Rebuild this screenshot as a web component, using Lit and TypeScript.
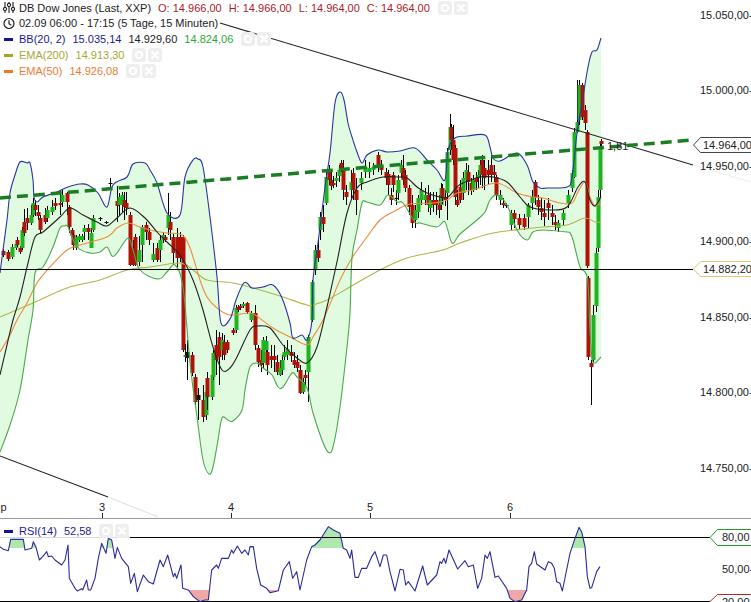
import { LitElement, html, css, svg } from "lit";
import { customElement } from "lit/decorators.js";

type Pt = [number, number];

// band and average curves, read off the chart in pixels
const upper: Pt[] = [[0,273],[3,250],[7,220],[10,193],[15,175],[20,162],[27,163],[30,163],[33,180],[34,197],[37,202],[43,197],[57,192],[68,187],[80,184],[88,185],[98,193],[107,207],[113,185],[127,177],[133,164],[145,163],[150,170],[157,183],[167,213],[180,215],[185,177],[193,160],[198,159],[203,167],[210,217],[217,277],[221,323],[230,319],[236,300],[243,284],[247,283],[252,288],[263,287],[273,285],[282,298],[290,323],[293,338],[302,335],[307,340],[312,320],[313,280],[318,243],[325,187],[330,153],[335,103],[340,92],[344,100],[348,123],[352,137],[357,152],[362,163],[367,155],[378,150],[387,152],[400,151],[415,148],[427,160],[437,170],[445,180],[448,150],[455,138],[467,136],[485,135],[490,147],[493,158],[500,161],[517,153],[527,165],[533,182],[540,188],[547,188],[567,187],[572,177],[577,133],[583,97],[588,67],[592,52],[597,50],[601,38]];
const lower: Pt[] = [[0,452],[10,425],[20,390],[28,340],[33,310],[35,273],[43,267],[53,247],[60,228],[65,226],[68,227],[77,247],[90,253],[100,252],[107,247],[112,256],[117,253],[128,238],[133,250],[140,270],[158,279],[167,272],[175,265],[183,287],[190,363],[197,417],[203,460],[209,474],[213,467],[218,440],[222,418],[228,420],[233,421],[242,410],[245,390],[250,367],[257,363],[263,368],[272,375],[278,387],[283,387],[292,373],[297,377],[307,388],[313,413],[322,440],[328,452],[333,447],[340,407],[347,347],[350,313],[352,258],[357,230],[362,203],[367,202],[380,205],[388,195],[397,202],[403,203],[415,222],[420,223],[437,227],[445,222],[452,243],[460,234],[477,220],[485,212],[490,200],[497,195],[507,205],[517,230],[527,240],[533,232],[543,230],[567,232],[570,233],[573,240],[580,267],[585,272],[588,283],[590,330],[592,358],[595,363],[601,357]];
const middle: Pt[] = [[0,375],[7,345],[13,320],[20,297],[28,263],[35,237],[43,232],[60,217],[70,208],[83,215],[97,222],[107,226],[117,218],[130,208],[145,218],[157,232],[168,243],[180,255],[193,280],[203,310],[213,347],[222,370],[230,368],[237,357],[250,330],[258,326],[270,328],[283,345],[297,358],[307,363],[317,347],[327,307],[333,280],[338,257],[347,213],[357,188],[367,182],[383,177],[397,177],[407,178],[417,187],[427,193],[440,197],[448,197],[457,187],[463,183],[480,177],[493,177],[507,182],[520,197],[530,207],[550,210],[567,207],[578,187],[585,182],[590,200],[595,206],[601,197]];
const ema50: Pt[] = [[0,352],[10,335],[17,320],[27,303],[37,283],[50,267],[67,250],[80,245],[107,237],[117,228],[128,223],[140,227],[150,230],[167,233],[182,235],[190,248],[200,280],[207,297],[217,308],[230,315],[250,313],[258,317],[273,328],[290,337],[307,345],[313,337],[323,320],[333,297],[340,280],[352,258],[367,237],[380,220],[393,212],[410,204],[433,203],[447,200],[457,193],[473,190],[497,183],[517,193],[533,197],[543,198],[560,203],[572,203],[578,192],[585,182],[590,197],[595,206],[601,202]];
const ema200: Pt[] = [[0,317],[33,303],[67,288],[100,280],[127,270],[150,267],[180,263],[193,270],[207,280],[233,283],[260,290],[283,297],[307,305],[313,305],[327,300],[350,287],[380,270],[407,258],[443,250],[460,243],[493,233],[533,228],[543,227],[567,225],[585,218],[595,222],[601,222]];

const rsiA: number[][] = [[0,170],[10,178],[25,182],[32,148],[70,148],[75,180],[95,175],[100,155],[108,172],[118,210],[128,200],[140,185],[145,200],[155,198],[165,210],[185,225],[195,210],[204,165],[208,265],[225,295],[232,303],[245,296],[248,300],[260,270],[265,300],[272,300],[285,265],[295,205],[305,160],[318,190],[325,145],[335,150],[345,205],[352,172],[365,205],[385,230],[392,280],[403,250],[412,305],[430,255],[445,275],[460,282],[480,210],[490,230],[503,195],[520,260],[525,250],[530,265],[543,225],[548,295],[565,300],[580,320],[600,335],[615,330],[625,330],[635,240],[650,225],[655,235],[665,205],[685,205],[695,180],[700,190],[712,168],[725,190],[735,180],[745,195],[750,170],[760,170],[770,235],[782,285],[800,295],[810,308],[835,302],[850,240],[868,215],[878,265],[890,245],[900,300],[920,210],[935,170],[945,165],[960,150],[985,110],[1000,120],[1020,130],[1030,175],[1040,180],[1050,205],[1055,180],[1065,262],[1075,262],[1085,235],[1100,235],[1115,200]];
const rsiB: number[][] = [[0,185],[15,230],[25,195],[35,195],[45,245],[60,303],[75,238],[85,240],[92,285],[100,275],[120,303],[143,228],[157,285],[185,255],[195,215],[200,220],[207,205],[212,220],[222,180],[248,237],[270,212],[280,230],[295,225],[308,295],[320,265],[330,195],[337,205],[345,185],[360,262],[370,258],[395,295],[405,325],[420,335],[440,330],[455,300],[462,230],[470,220],[478,185],[485,222],[510,240],[520,215],[530,220],[538,235],[545,275],[555,280],[562,303],[585,190],[600,145],[612,112],[620,125],[630,170],[637,260],[645,295],[650,293],[665,245],[675,230]];
const rsi: Pt[] = [
  ...rsiA.map(([x, y]): Pt => [x / 3, y / 3 + 490]),
  ...rsiB.map(([x, y]): Pt => [x / 3 + 375, y / 3 + 490]),
];

// x, body top, body bottom, colour, wick top, wick bottom
type Candle = [number, number, number, string, number?, number?];
const candles: Candle[] = [
  [3,251,255,"r"],[8,252,259,"r"],[12,247,257,"g",244,259],[16,244,248,"g"],[17,240,245,"r",237,247],[20,248,252,"r"],[22,230,248,"g",227,250],[24,222,233,"r",209,236],[27,218,223,"r",208,230],[31,215,223,"g",205,225],[33,203,215,"g",198,217],[35,205,210,"r",200,216],[38,212,216,"r",205,220],[40,218,230,"r",215,233],[45,215,222,"r",208,224],[47,210,218,"g",206,222],[52,207,212,"g",200,215],[55,203,206,"r",198,210],[60,203,205,"r",190,215],[62,195,202,"g",190,207],[67,193,202,"r",192,215],[69,207,227,"r",205,233],[72,230,236,"r"],[73,235,245,"r",233,250],[76,237,248,"g"],[79,236,240,"g"],[82,236,240,"g"],[84,228,232,"g",225,240],[88,228,232,"r",224,240],[91,233,248,"g",228,248],[93,218,230,"g",215,232],
  [100,218,219,"k",217,221],[106,222,223,"k",221,224],[110,183,184,"k",178,190],[117,201,206,"r",186,222],[119,197,205,"g",193,215],[122,195,205,"g",192,212],[124,200,207,"r",192,220],[126,203,208,"r",192,215],[130,215,265,"r",212,266],[133,248,265,"r",240,266],[135,237,265,"r",234,266],[139,250,262,"g",236,266],[142,227,245,"g",225,262],[146,225,232,"r",222,240],[149,232,240,"r",228,245],[153,254,260,"g",243,262],[157,248,260,"r",243,262],[160,240,250,"g",235,262],[163,235,240,"g",232,243],[165,237,240,"r"],[168,215,228,"g",193,235],[170,222,230,"r",212,240],[173,237,253,"r",234,265],[177,237,258,"r",228,268],[180,237,258,"r",232,262],
  [183,237,350,"r"],[185,355,357,"g",344,362],[187,352,358,"k",340,380],[192,355,373,"r",352,376],[195,377,402,"r",374,405],[198,395,400,"k",388,420],[203,400,417,"r",385,422],[206,392,415,"g",385,420],[207,378,397,"r",372,410],[212,375,397,"g",372,400],[213,353,377,"g",350,380],[216,345,360,"r",330,375],[219,337,357,"r",332,385],[222,340,350,"g",333,360],[224,342,355,"r",335,360],[227,342,350,"r",340,353],
  [233,330,333,"r"],[236,308,330,"g",305,333],[238,307,310,"r"],[240,306,308,"r"],[243,304,306,"g"],[247,303,312,"r",302,314],[251,313,320,"g"],[255,313,345,"r",305,350],[258,348,362,"r",345,367],[261,360,365,"r",350,372],[263,340,363,"g",337,368],[266,341,350,"g",336,362],[267,352,365,"r",350,375],[271,356,360,"r",345,368],[274,356,360,"r",345,372],[277,362,372,"r",355,375],[280,368,375,"g",360,376],[282,360,370,"g",355,375],[284,352,357,"g",345,360],[287,349,355,"g",340,360],[291,352,356,"r",345,362],[294,360,365,"r",352,368],[297,362,368,"r",355,372],[300,370,393,"r",365,394],[303,382,392,"g",378,394],[305,375,378,"r",370,385],[308,337,372,"g",335,402],
  [312,282,320,"g",280,322],[315,250,270,"g",245,275],[318,250,258,"r",240,262],[320,217,230,"g",212,240],[323,217,224,"r",205,232],[326,177,203,"g",172,205],[329,172,180,"r",165,185],[331,180,186,"r",172,190],[333,183,185,"r",176,188],[336,178,181,"g",172,187],[339,170,176,"g",165,182],[341,163,168,"r",160,172],[343,168,190,"r",160,200],[346,192,197,"r",185,205],[351,182,190,"g",170,200],[353,173,190,"r",168,200],[356,190,200,"r",178,215],[361,178,183,"g",172,190],[365,167,172,"g",160,178],[369,168,172,"g",162,178],[373,167,170,"g",163,175],[378,155,165,"r",152,172],[381,167,170,"r",160,175],[386,172,178,"r",168,185],[388,174,185,"r",170,195],[391,195,200,"r",188,205],[393,175,185,"r",172,192],[396,198,199,"k",190,205],[398,180,193,"g",175,200],[401,165,173,"g",160,178],[403,168,180,"r",155,185],[405,175,188,"r",170,192],[409,188,207,"r",185,215],[412,205,223,"r",195,228],[415,210,220,"g",205,228],[418,198,212,"g",195,218],[421,190,200,"g",182,205],[425,195,200,"g",188,205],[428,195,205,"r",185,212],[430,200,208,"g",192,215],[433,200,205,"r",192,212],[436,200,205,"r",192,215],[439,205,210,"r",195,218],[441,188,205,"g",183,210],[442,188,197,"r",184,204],[445,197,200,"r",190,206],[447,152,193,"g",148,220],
  [450,127,150,"g",114,155],[451,127,140,"r",124,150],[453,140,160,"r",125,165],[455,148,197,"r",145,205],[457,200,205,"r",190,207],[460,187,200,"r",180,203],[463,178,193,"g",172,200],[466,170,180,"g",163,190],[468,172,182,"r",165,195],[471,183,190,"r",178,195],[473,180,190,"g",175,192],[476,178,182,"r",172,190],[478,175,178,"g",170,188],[480,165,175,"g",160,185],[482,160,175,"r",155,188],[484,168,178,"r",160,190],[488,170,175,"r",160,185],[491,165,175,"r",155,182],[494,172,175,"r",165,182],[496,177,195,"r",175,200],[500,195,200,"g",190,205],[503,203,205,"r",198,208],[506,205,206,"k",203,208],
  [511,213,225,"g",210,230],[514,213,219,"r",210,228],[519,218,225,"r",214,230],[524,218,227,"r",214,230],[528,205,217,"g",203,228],[532,197,203,"g",190,210],[535,182,197,"r",180,205],[538,200,207,"r",195,215],[541,208,212,"r",198,220],[544,213,217,"r",200,226],[548,203,208,"r",198,220],[552,213,217,"r",205,225],[555,222,225,"r",215,230],[558,223,228,"g",220,232],[563,213,220,"g",210,225],[568,195,203,"g",190,208],[572,173,188,"g",170,192],[574,132,177,"g",128,178],[577,122,132,"g",80,133],[579,85,120,"g",80,125],[582,85,117,"r",83,120],[585,110,123,"r",105,130],[587,132,266,"r"],[588,278,357,"r",276,360],[591,363,367,"r",360,405],[593,315,360,"g",305,362],[596,253,306,"g",248,312],[598,197,248,"g",190,252],[600,147,190,"g",144,197],[601,141,144,"r"],
];

const fillCol: Record<string, string> = { g: "#1db41d", r: "#b01208", k: "#111" };

function pts(p: Pt[]) {
  return p.map(([x, y]) => `${x},${y}`).join(" ");
}

// catmull-rom through the points, keeps the bands round instead of kinked
function smooth(p: Pt[]) {
  let d = `M${p[0][0]} ${p[0][1]}`;
  for (let i = 0; i < p.length - 1; i++) {
    const a = p[Math.max(i - 1, 0)], b = p[i], c = p[i + 1], e = p[Math.min(i + 2, p.length - 1)];
    const c1x = b[0] + (c[0] - a[0]) / 6, c1y = b[1] + (c[1] - a[1]) / 6;
    const c2x = c[0] - (e[0] - b[0]) / 6, c2y = c[1] - (e[1] - b[1]) / 6;
    d += `C${c1x.toFixed(1)} ${c1y.toFixed(1)} ${c2x.toFixed(1)} ${c2y.toFixed(1)} ${c[0]} ${c[1]}`;
  }
  return d;
}

const axisY: [string, number][] = [["15.050,00-",15],["15.000,00-",90],["14.950,00-",166],["14.900,00-",241],["14.850,00-",317],["14.800,00-",392],["14.750,00-",468]];
const dates: [string, number][] = [["3",102],["4",231],["5",370],["6",510]];

@customElement("app-root")
export class AppRoot extends LitElement {
  static styles = css`
    :host {
      display: block;
      position: relative;
      width: 751px;
      height: 602px;
      overflow: hidden;
      background: #fff;
      font-family: "Liberation Sans", Arial, sans-serif;
      font-size: 11px;
      color: #222;
    }
    .chart { display: block; }
    .chart text { font-family: "Liberation Sans", Arial, sans-serif; font-size: 11px; fill: #222; }
    .curve { fill: none; stroke-width: 1.1; stroke-linejoin: round; }
    .legend {
      position: absolute;
      left: 3px;
      top: 0;
      display: flex;
      flex-direction: column;
    }
    .rsi-legend {
      position: absolute;
      left: 0;
      top: 523px;
      width: 127px;
      height: 15px;
      padding-left: 3px;
      background: rgba(255, 255, 255, 0.85);
      display: flex;
    }
    .row {
      display: flex;
      align-items: center;
      height: 16px;
      white-space: nowrap;
      gap: 7px;
    }
    .row svg { flex: none; width: 12px; height: 13px; margin-right: 4px; }
    .row.first { height: 15px; }
    .mark { flex: none; width: 9px; height: 3px; margin: 0 6px 0 1px; }
    .label { margin-left: -7px; }
    .btns { display: flex; gap: 2px; margin-left: 1px; }
    .btn {
      width: 14px;
      height: 14px;
      border-radius: 3px;
      background: #eeeeee;
      display: flex;
      align-items: center;
      justify-content: center;
    }
    .btn svg { width: 10px; height: 10px; margin: 0; }
    .red { color: #a81c2c; }
    .blue { color: #1b1b8e; }
    .dark { color: #222; }
    .green { color: #2aa838; }
    .olive { color: #a8a832; }
    .orange { color: #ee7a30; }
    .m-blue { background: #14148c; }
    .m-olive { background: #a8a820; }
    .m-orange { background: #f07820; }
  `;

  private btns() {
    return html`<span class="btns">
      <span class="btn"><svg viewBox="0 0 10 10"><circle cx="5" cy="5" r="3.2" fill="none" stroke="#fff" stroke-width="2"/></svg></span>
      <span class="btn"><svg viewBox="0 0 10 10"><path d="M1.5 1.5l7 7M8.5 1.5l-7 7" stroke="#fff" stroke-width="2.2"/></svg></span>
    </span>`;
  }

  private renderCandles() {
    // half pixel offsets so wicks and bodies land on whole pixels
    return candles.map(([x, t, b, c, hi, lo]) => svg`
      <line x1=${x + 0.5} x2=${x + 0.5} y1=${hi ?? t - 2} y2=${lo ?? b + 2} stroke="#000" stroke-width="1"/>
      <rect x=${x - 1.5} y=${t} width="4" height=${b - t} fill=${fillCol[c]}/>
    `);
  }

  private renderChart() {
    const rsiLine = pts(rsi);
    const first = rsi[0][0], last = rsi[rsi.length - 1][0];
    return svg`
      <defs>
        <clipPath id="over"><rect x="0" y="500" width="751" height="48"/></clipPath>
        <clipPath id="under"><rect x="0" y="590" width="751" height="12"/></clipPath>
      </defs>

      <path d=${smooth(upper) + "L" + [...lower].reverse().map(p => p.join(" ")).join("L") + "Z"} fill="#e0fbe0"/>
      ${this.renderCandles()}

      <path class="curve" d=${smooth(ema200)} stroke="#b4b446"/>
      <path class="curve" d=${smooth(ema50)} stroke="#f08a3c"/>
      <path class="curve" d=${smooth(middle)} stroke="#222"/>
      <path class="curve" d=${smooth(lower)} stroke="#4aa84a"/>
      <path class="curve" d=${smooth(upper)} stroke="#2a35a0"/>

      <line x1="0" y1="269.5" x2="693" y2="269.5" stroke="#000"/>
      <line x1="220" y1="23" x2="693" y2="165" stroke="#222" stroke-width="1.1"/>
      <line x1="693" y1="165" x2="751" y2="182" stroke="#eee"/>
      <line x1="0" y1="456" x2="108" y2="497" stroke="#222" stroke-width="1.1"/>
      <line x1="108" y1="497" x2="158" y2="517" stroke="#ddd"/>
      <line x1="0" y1="198" x2="693" y2="140" stroke="#1a7d22" stroke-width="3.5" stroke-dasharray="11 6"/>
      <text x="607" y="150">1,81</text>

      ${axisY.map(([t, y]) => svg`<text x="700" y=${y + 4}>${t}</text>`)}
      <polygon points="693.5,145 700.5,137.5 752,137.5 752,152.5 700.5,152.5" fill="#fff" stroke="#444"/>
      <text x="703" y="149">14.964,00</text>
      <polygon points="693.5,269 700.5,261.5 752,261.5 752,276.5 700.5,276.5" fill="#fff" stroke="#e0c870"/>
      <text x="703" y="273">14.882,20</text>

      <line x1="0" y1="518.5" x2="751" y2="518.5" stroke="#999"/>
      <text x="-13" y="511">Sep</text>
      ${dates.map(([t, x]) => svg`
        <text x=${x} y="511" text-anchor="middle">${t}</text>
        <line x1=${x + 0.5} x2=${x + 0.5} y1="513" y2="518" stroke="#222"/>
      `)}

      <polygon clip-path="url(#over)" points=${`${first},548 ${rsiLine} ${last},548`} fill="#aee8ae"/>
      <polygon clip-path="url(#under)" points=${`${first},590 ${rsiLine} ${last},590`} fill="#efa8a8"/>
      <line x1="0" y1="537.5" x2="710" y2="537.5" stroke="#000"/>
      <line x1="0" y1="601.5" x2="710" y2="601.5" stroke="#000"/>
      <polyline class="curve" points=${rsiLine} stroke="#2a2a9c"/>
      <polygon points="710,537.5 717.5,529.5 752,529.5 752,545.5 717.5,545.5" fill="#fff" stroke="#2a9a2a"/>
      <text x="722" y="541">80,00</text>
      <text x="722" y="573">50,00-</text>
      <polygon points="710,601.5 717.5,594.5 752,594.5 752,610 717.5,610" fill="#fff" stroke="#b02a2a"/>
      <text x="722" y="606">20,00</text>
    `;
  }

  render() {
    return html`
      <svg class="chart" width="751" height="602" viewBox="0 0 751 602">${this.renderChart()}</svg>

      <div class="legend">
        <div class="row first">
          <svg viewBox="0 0 12 13" fill="none" stroke="#222" stroke-width="1.1">
            <path d="M2 1v11M6 1v11M10 1v11"/>
            <circle cx="2" cy="8" r="1.6" fill="#fff"/><circle cx="6" cy="4" r="1.6" fill="#fff"/><circle cx="10" cy="8" r="1.6" fill="#fff"/>
          </svg>
          <span class="label">DB Dow Jones (Last, XXP)</span>
          <span class="red">O: 14.966,00</span><span class="red">H: 14.966,00</span><span class="red">L: 14.964,00</span><span class="red">C: 14.964,00</span>
          ${this.btns()}
        </div>
        <div class="row">
          <svg viewBox="0 0 12 13" fill="none" stroke="#222" stroke-width="1.2">
            <circle cx="6" cy="6.5" r="5"/><path d="M6 3.2v3.5l2.4 1.6"/>
          </svg>
          <span class="label">02.09 06:00 - 17:15 (5 Tage, 15 Minuten)</span>
        </div>
        <div class="row">
          <span class="mark m-blue"></span>
          <span class="blue label">BB(20, 2)</span><span class="blue">15.035,14</span><span class="dark">14.929,60</span><span class="green">14.824,06</span>
          ${this.btns()}
        </div>
        <div class="row">
          <span class="mark m-olive"></span>
          <span class="olive label">EMA(200)</span><span class="olive">14.913,30</span>
          ${this.btns()}
        </div>
        <div class="row">
          <span class="mark m-orange"></span>
          <span class="orange label">EMA(50)</span><span class="orange">14.926,08</span>
          ${this.btns()}
        </div>
      </div>

      <div class="rsi-legend">
        <div class="row">
          <span class="mark m-blue"></span>
          <span class="blue label">RSI(14)</span><span class="blue">52,58</span>
          ${this.btns()}
        </div>
      </div>
    `;
  }
}
